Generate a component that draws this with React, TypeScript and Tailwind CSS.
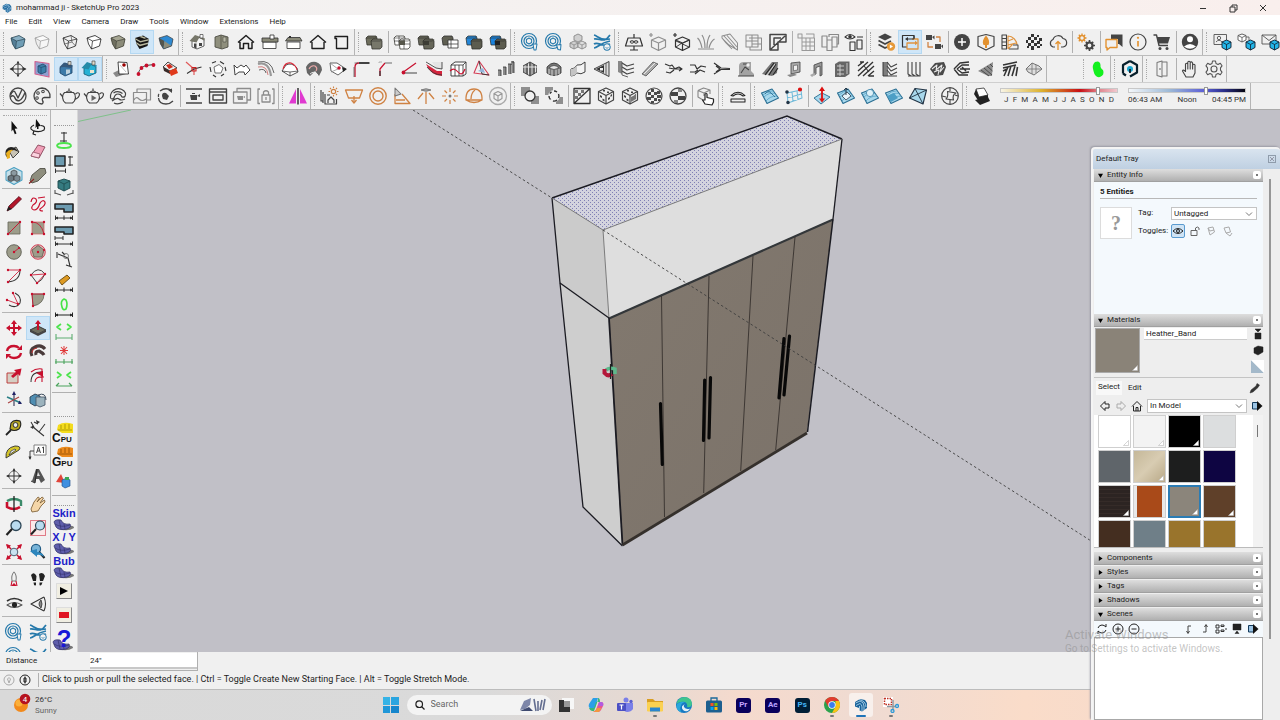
import React from "react";

type Shape = [string, string?, string?, number?];
type IconDef = Shape[];

const circle = (cx: number, cy: number, r: number) =>
  `M${cx - r} ${cy}a${r} ${r} 0 1 0 ${2 * r} 0a${r} ${r} 0 1 0 ${-2 * r} 0z`;
const line = (d: string, color = "#333", width = 1.2): Shape => [d, "none", color, width];
const fill = (d: string, color = "#333"): Shape => [d, color];
const both = (d: string, color: string, stroke = "#333", width = 0.9): Shape => [d, color, stroke, width];

const GRAY = "#8c8c8c";
const DARK = "#444444";
const ORANGE = "#cf8243";
const BLUE = "#2579ab";
const RED = "#c8102e";

const HEX = "M5 8L13 5.5L19 9L17.5 16L9.5 19L6.5 14Z";
const HEX_IN = "M5 8L10.5 11L19 9M10.5 11L9.5 19";
const cubeIcon = (a: string, b: string, c: string, edge: string): IconDef => [
  fill(HEX, a),
  fill("M5 8L10.5 11L9.5 19L6.5 14Z", b),
  fill("M10.5 11L19 9L17.5 16L9.5 19Z", c),
  line(HEX, edge, 0.9),
  line(HEX_IN, edge, 0.8),
];
const house = (body: string, roof: string): IconDef => [
  both("M6 11V17L11 19L18 16V10L14 7Z", body, "#333", 0.8),
  fill("M3.500 11L9 5L19 8.500L18.500 10.500L13 8L10.500 12.500Z", roof),
  fill("M8 13.500H10.500V18.500L8 17.500ZM13 13H16V16H13Z", "#444"),
  both("M14 4.500H17V8H14Z", "#fff", "#333", 0.7),
];
const solid = (a: string, b: string): IconDef => [
  both("M4 8L6 6H14L15 8V14L13 15H5Z", a, "#2d2d28", 0.8),
  both("M9 11L11 9H19L20 11V17L18 19H10Z", b, "#2d2d28", 0.8),
  line("M9 11H18.500L20 9.500M4 8H13L15 6.500", "#2d2d28", 0.6),
];
const ringTool = (extra: Shape[]): IconDef => [
  line(circle(11, 11, 7.5), BLUE, 1.3),
  line(circle(11, 11, 5), BLUE, 1.3),
  line("M11 8L13.600 9.500V12.500L11 14L8.400 12.500V9.500Z", BLUE, 1.1),
  ...extra,
];
const wavesTool: IconDef = [
  line("M4 5C8 6 10 11 20 9M4 9C10 8 14 14 20 5M4 14C8 11 13 18 20 14M4 18C8 18 9 13 20 11", BLUE, 1.8),
  both(circle(17, 17, 3.2), "#f2f2f2", BLUE, 1.1),
  line("M15.500 17.500Q17 19 18.500 17.500", BLUE, 0.8),
];
const terrain = (extra: Shape[]): IconDef => [
  both("M3.500 9L14 5L20.500 14L9 19.500Z", "#a8d8ec", "#2b6f93", 1.2),
  line("M6 13Q11 8 17 9.500M5 11Q9 7 15 6.800M8 17Q12 12 19 12", "#4b9cc2", 0.8),
  ...extra,
];
const teapot = (extra: Shape[] = []): IconDef => [
  line("M6.500 8.500C3.500 11 4 16.500 7.500 19H14.500C18 16.500 18.500 11 15.500 8.500ZM8 8.500C9 6.500 13 6.500 14 8.500M11 7V4.500M4.500 12.500L2 9.500M17.500 10Q20.500 7.500 21.500 10Q21.500 13.500 17 15.500", DARK, 1.3),
  ...extra,
];
const dim = (y: number, c = "#333"): Shape[] => [
  line(`M3 ${y}H21M3.500 ${y - 2.5}V${y + 2}M20.500 ${y - 2.5}V${y + 2}`, c, 1.1),
  fill(`M3 ${y}L6 ${y - 1.6}V${y + 1.6}ZM21 ${y}L18 ${y - 1.6}V${y + 1.6}Z`, c),
];
const compBox = (c: string): IconDef => [
  line("M12.500 7L19.500 10V17L12.500 20.500L5.500 17V10ZM5.500 10L12.500 13L19.500 10M12.500 13V20", c, 1.3),
  line("M5 3V7M3 5H7", c, 1.3),
];
const branches: IconDef = [line("M3 7L8 9L10 8L13 12H20M4 15L8 16L12 13M7 11L12 12L17 10L20 12L17 14", "#333", 1.3)];
const blob: IconDef = [
  fill("M4 12L9 6L18 5L20 10L17 18L9 19Z", "#4a4a4a"),
  line("M6 12L11 8L10 13L16 8L14 15L18 10M8 15L13 13L12 18", "#ececec", 1.1),
];
const checker = (c: string): IconDef => [
  line(circle(12, 12, 8), c, 1.3),
  fill("M9 5h3v3h-3zM15 7h3v3h-3zM6 8h3v3h-3zM12 8h3v3h-3zM9 11h3v3h-3zM15 11h4v3h-4zM5 13h4v3h-4zM12 14h3v3h-3zM9 17h3v2.500h-3zM16 15h2v2h-2z", c),
];
const dice = (c: string): IconDef => [
  line("M12 4L19.500 7.500V16L12 20L4.500 16V7.500ZM4.500 7.500L12 11.500L19.500 7.500M12 11.500V20", c, 1.3),
  fill("M9 6h2v1.500h-2zM13 7.500h2V9h-2zM6 11l2 1v2l-2-1zM8.500 14.500l2 1v2l-2-1zM14 14l2-1v2l-2 1zM16.500 11l1.500-1v2l-1.500 1z", c),
];

const ICONS: Record<string, IconDef> = {
  xray: cubeIcon("#8ab0c4", "#557f97", "#6f9db5", "#2e4a58"),
  backEdges: cubeIcon("#fbfbfb", "#eee", "#f6f6f6", "#9b9b9b"),
  wire: [line(HEX, "#222", 0.9), line(HEX_IN, "#222", 0.8), line("M6.500 14L14 12L17.500 16M13 5.500L14 12", "#444", 0.7)],
  hidden: cubeIcon("#fff", "#fff", "#fff", "#222"),
  shaded: cubeIcon("#a5a592", "#6f6f60", "#8b8b79", "#44443a"),
  textured: [
    fill(HEX, "#151515"),
    fill("M5 8L10.500 11L19 9L18.700 10.500L10.300 12.600L5.400 9.500ZM6.200 12L10 14.500L18.200 12.500L17.900 14L9.900 16.200L6.500 13.800ZM9 6.800L14.500 8.800L16.500 8L11.500 6Z", "#b9b9a0"),
  ],
  mono: [fill(HEX, "#2f8ad2"), fill("M5 8L10.500 11L9.500 19L6.500 14Z", "#55554c"), fill("M10.500 11L19 9L17.500 16L9.500 19Z", "#2f8ad2"), fill("M10.500 11L17.500 16L9.500 19Z", "#8d8d7b"), line(HEX, "#444", 0.8)],
  iso: house("#f4f4f4", "#77776a"),
  topView: [both("M5 7L11 5L18 7V17L12 19L5 17Z", "#8f8f7d", "#44443b", 0.9), line("M11 5V19", "#55554a", 0.9), both("M13 7H16V12H13Z", "#b8b8a6", "#44443b", 0.6)],
  frontView: [line("M6 12V18.500H9.500V13.500H14.500V18.500H18V12M4 12.500L12 5.500L20 12.500", "#1e1e1e", 1.6)],
  rightView: [both("M5 12H18V18.500H5Z", "#fff"), both("M4 8H20V12H4Z", "#8a8a79"), both("M12 5H16V9H12Z", "#fff")],
  backView: [both("M5 12H18V18.500H5Z", "#fff"), both("M3.500 11L6 7.500H18L20 11Z", "#8a8a79"), fill("M7 6H9V8H7Z", "#333")],
  leftView: [line("M6 12V18.500H18V12M4 12.500L12 5.500L20 12.500", "#1e1e1e", 1.5)],
  bottomView: [line("M6.500 6.500H17.500V18.500H6.500V8.500H5V6.500Z", "#1e1e1e", 1.5)],
  outer: solid("#6e6e5d", "#77776a"),
  intersect: [...solid("#fff", "#fff"), line("M9 6V15M4 11H15M14 9V19M9 14H20", "#333", 0.7), fill("M9 10.500H15V15H9Z", "#55554a")],
  union: [...solid("#67675a", "#67675a"), fill("M9 11H15V15H9Z", "#3c3c34")],
  subtract: [both("M4 8L6 6H14L15 8V14L13 15H5Z", "#5f5f52"), both("M10 10H20V18H10Z", "#fff"), line("M13 10V18M10 14H20", "#333", 0.8)],
  trim: solid("#2386d8", "#5c5c4f"),
  split: [...solid("#1b83dd", "#5c5c4f"), fill("M9 11H14V15H9Z", "#222")],
  ring1: ringTool([both("M15 14H19L18 20H16Z", "#f2f2f2", BLUE, 1.1)]),
  ring2: ringTool([both("M14.500 15L19 14.500L18.500 20L16 19.500Z", "#f2f2f2", BLUE, 1.1)]),
  cubes: [
    both("M12 4L16 6V10L12 12L8 10V6Z", "#cfcfcf", "#8a8a8a", 1),
    both("M8 11L12 13V17L8 19L4 17V13Z", "#cfcfcf", "#8a8a8a", 1),
    both("M16 11L20 13V17L16 19L12 17V13Z", "#dedede", "#8a8a8a", 1),
    line("M4 13L8 15L12 13L16 15L20 13M8 15V19M16 15V19", "#8a8a8a", 0.9),
  ],
  waves: wavesTool,
  plane: [line("M6 8H18L20.500 16H3.500ZM12 4V8M12 16V20M8 20H16", "#333", 1.3), line("M8 12Q10 9.500 12 12T16 12Q14 9.500 12 12T8 12", "#333", 1.1)],
  boxPlus: compBox("#8f8f8f"),
  boxDark: [...compBox("#333"), line("M6 11L19 17M6 17L12 13M19 10L13 13", "#333", 1)],
  grass: [line("M4 19H20M8 18C7 13 6 10 3.500 8M11 18C11 12 10 8 8 5M13 18C13 12 14 8 16 5M15 18C16 14 17 11 20.500 9", GRAY, 1.3)],
  clipPlane: [line("M4 6L12 4L19.500 13V20L11 15L4 8ZM6 6L17 18M9 5.500L19 17M4 8L8 13L14 19", GRAY, 1.1)],
  tiles: [line("M4 5H16V17H4ZM10 5V17M4 11H16M7 8H19.500V20H8V17M19 14H10", GRAY, 1.1)],
  cornerBox: [line("M4 4.500H20V12H12V20H4ZM5 19L19 6M8 15V8H15", DARK, 1.6)],
  gridPlus: [line("M4 4H8V8H4ZM8 8H20.500V20.500H8ZM12 8V20M16 8V20M8 12H20M8 16H20M12 4H20V8", "#999", 1.1)],
  panels: [line("M4 6H9V17H4ZM9 10H14V20.500H9ZM14 7H19V17H14ZM11 7V4.500H20.500V14H19", "#8a8a8a", 1.3)],
  eyePanels: [line("M3 7Q8 2 13 7Q8 11 3 7ZM8 12V20.500H13V12ZM15 10H20V19H15ZM15 7H21", "#333", 1.2), fill(circle(8, 6.8, 1.8), "#333")],
  assets: [fill("M4 7L11 3.500L18 7L11 10.500Z", DARK), line("M4.500 10.500L11 14L17 11M4.500 14.500L11 18L13 17", DARK, 2), fill(circle(17, 16.5, 4.2), "#e69a3a"), fill("M15.800 14.500L19 16.500L15.800 18.500Z", "#fff")],
  swap: [line("M9 17H4.500V5.500H16V9", "#333", 1.3), line("M14 9H20V19H9V13H17", "#df9440", 1.4), fill("M17 10.800L20 13L17 15.200Z", "#df9440"), line("M16 9V5.500M9 9H16", "#333", 1.2), fill("M10 7L7 9L10 11Z", "#333")],
  cams: [fill("M4 5H10V10H4ZM10 7L12.500 5.500V9.500ZM13 14H19V19H13ZM19 16L21 14.500V18.500Z", DARK), line("M14 7H18V12M6 12V17H11", ORANGE, 1.4)],
  plusDisc: [fill(circle(12, 12, 8), DARK), line("M12 8V16M8 12H16", "#fff", 1.6)],
  shieldFlame: [line("M4 6.500L12 4.500L20 6.500V16L12 20L4 16Z", DARK, 1.3), fill("M12 5.500C15 9 16 12 14.500 15H13V18H11V15H9.500C8 12 9 9 12 5.500Z", "#e2912f")],
  swatchFan: [line("M4 5H8.500V19H4ZM4 8.500H8.500M4 12H8.500M4 15.500H8.500", DARK, 1.2), line("M10 19V6C15 6 19 11 19 15M10 11L15 9M10 15L18 13M10 19L15 14", "#df9440", 1.2), line("M11 19H20V15H15", DARK, 1.1)],
  checkDark: [fill("M9 4h3v3h-3zM15 5h2v2h-2zM6 7h3v3h-3zM12 7h3v3h-3zM17 8h3v3h-3zM4 10h2v3h-2zM9 10h3v3h-3zM15 11h3v3h-3zM6 13h3v3h-3zM12 13h3v3h-3zM18 14h2v2h-2zM9 16h3v4h-3zM15 16h3v2h-3zM5 16h2v2h-2z", "#333")],
  cloudUp: [line("M9 17H7A4 4 0 0 1 7 9.500A5.500 5.500 0 0 1 17 8.500A4.300 4.300 0 0 1 17 17H15", "#444", 1.3), line("M12 20V11.500M9.500 14L12 11.500L14.500 14", "#e2912f", 1.4)],
  gears: [line(circle(8, 8, 2.5), "#e2912f", 1.8), line("M8 3.500V5M8 11V12.500M3.500 8H5M11 8H12.500M4.800 4.800L6 6M10 10L11.200 11.200M4.800 11.200L6 10M10 6L11.200 4.800", "#e2912f", 1.4), line(circle(15.5, 15.5, 3), DARK, 2.4), line("M15.500 10V12M15.500 19V21M10 15.500H12M19 15.500H21M11.800 11.800L13 13M18 18L19.200 19.200M11.800 19.200L13 18M18 13L19.200 11.800", DARK, 1.8)],
  chat: [fill("M9 4.500H20.500V17L17 14H16V9H9Z", DARK), line("M4 9.500H15V17.500H8L5 20V17.500H4Z", "#e2912f", 1.5)],
  info: [line(circle(12, 12, 8), DARK, 1.3), line("M12 11V16.500", "#e2912f", 1.8), fill(circle(12, 7.8, 1.1), "#e2912f")],
  cart: [line("M3.500 5H6.500L9 15.500H18", DARK, 1.5), fill("M6.800 7H20L18 13.500H8.300Z", DARK), fill(circle(10, 18.5, 1.5), DARK), fill(circle(17, 18.5, 1.5), DARK)],
  user: [fill(circle(12, 12, 8.2), DARK), fill(circle(12, 9.3, 3), "#fff"), fill("M6 16.500Q12 11.500 18 16.500Q12 21 6 16.500Z", "#fff")],
  whPhoto: [line("M4 4.500H16.500V14.500H4ZM6 12Q9 8.500 12 12", "#555", 1), line(circle(9, 8, 1.7), "#555", 1), both("M16.500 10L21 12V17.500L16.500 20L12 17.500V12Z", "#23b5e8", "#123", 1), line("M12 12L16.500 14.500L21 12M16.500 14.500V20", "#123", 0.9)],
  whBoxes: [both("M8 4L12 5.500V10L8 12L4 10V5.500Z", "#fff", "#555", 1), line("M4 5.500L8 7.500L12 5.500M8 7.500V12M12 7H15V10", "#555", 0.9), both("M16.500 10L21 12V17.500L16.500 20L12 17.500V12Z", "#23b5e8", "#123", 1), line("M12 12L16.500 14.500L21 12M16.500 14.500V20", "#123", 0.9)],
  whMail: [line("M4 5H18V14H4ZM4 5L11 10.500L18 5", "#555", 1), both("M16.500 10L21 12V17.500L16.500 20L12 17.500V12Z", "#23b5e8", "#123", 1), line("M12 12L16.500 14.500L21 12M16.500 14.500V20", "#123", 0.9)],
  section: [line(circle(12, 12, 5), "#333", 1), line("M4.500 12H19.500M12 4.500V19.500", "#333", 1), fill("M3.500 12L7 10V14ZM20.500 12L17 10V14ZM12 4L10.500 6.500H13.500ZM12 20L10.500 17.500H13.500Z", "#333")],
  sectPlane: [both("M5 4.500L19 6.500V20L5 17Z", "#8fa0cf", "#d4608e", 1.2), both("M8 9L13 7L16 9V15L11 17L8 15Z", "#3c7fa9", "#244b70", 0.9), line("M8 9L11 10.500L16 9M11 10.500V17", "#244b70", 0.8)],
  sectCut: [both("M6 11L11 6L18 9V16L11 19L6 16Z", "#3c7aa8", "#1e4568"), fill("M5 10.500L10 5.500L19 8.500L17 11L10 10Z", "#35597c"), fill("M12 12.500H16V16L12 17.500Z", "#bed2dd"), both("M14 4.500H17V8H14Z", "#d7d7cf", "#444", 0.7)],
  sectFill: [both("M6 11V17L11 19L18 16V10L14 7Z", "#26b1d5", "#145b74"), fill("M3.500 11L9 5L19 8.500L18 10.500L13 8L10.500 12.500Z", "#258ba8"), fill("M12 13H16V16H12Z", "#e9e3cf"), both("M14 4H17V8H14Z", "#ded9c7", "#444", 0.7)],
  m1: [fill("M3 16L9 13L16 17L6 20Z", "#888"), both("M8 5L17 5.500L18.500 17L9 17Z", "#fff", "#222"), fill(circle(14, 8, 1.8), "#900"), line("M10 8L16 15", "#aaa", 0.8)],
  m2: [line("M4 17Q6 10 12 8.500L20 7.500", "#333", 1), fill(circle(4.5, 17, 1.9), RED), fill(circle(7.5, 11, 1.9), RED), fill(circle(12.5, 8.5, 1.9), RED), fill(circle(19.5, 8, 1.9), RED)],
  m3: [both("M5 10L10 5L19 11L12 14Z", "#eee", "#222"), fill("M5 10L12 14V17L6 14Z", "#3a2a28"), fill("M11 14L18 11L20 16L13 19Z", "#e03a1b"), fill("M8 8L12 7L15 10L11 12Z", "#d02a1b")],
  m4: [line("M4 5L12 12V18", "#e05a5a", 1.3), line("M12 12L19.500 10M12 12L5 16.500", "#333", 1.1), line("M10 10.500H14V14H10Z", "#c22", 1.2)],
  m5: [line("M6 6L10 4.500M14 4.500L18 7M4 10L5 15M19 10L20 14M7 18L10 20M15 19L18 17", "#333", 1.2), both("M8 10L13 7.500L17 11L15 16L9 16Z", "#fff", "#555", 0.9)],
  m6: [both("M4 8L7 11L11 8L14 10L16 8L20 13L15 18L14 15H9L5 18Z", "#fff", "#333", 1)],
  m7: [line("M4 7Q15 4 17 19", "#999", 2.4), line("M4 10Q13 8 14 18", "#c66", 0.9), line("M5 13Q11 11 12 16M4 5Q17 2 20 16", "#333", 0.8)],
  m8: [both("M4 14L8 8Q14 5 19 11L20 15L12 19Z", "#fff", "#333"), line("M5 12Q7 5 13 6Q18 8 19 13", "#d23", 1.1), line("M4 14L12 15L20 14M12 15V19", "#333", 0.8)],
  m9: [fill("M4 10Q7 4 14 5Q20 7 20 13L17 19L13 14L8 19L5 16Z", "#666"), line("M7 12Q9 8 13 9Q16 11 14 14", "#eaa", 1.2), line("M8 17Q12 13 16 18", "#eee", 1)],
  m10: [both("M4 6H11L20 12L12 18L5 14Z", "#fff", "#444"), line("M4 6L12 12L5 15", "#888", 0.8), fill(circle(13, 11, 1.7), RED), fill("M16 10L21 12L17 15Z", "#222")],
  m11: [line("M5 20V10Q5 6 9 6", RED, 1.4), line("M9 6H19.500", "#111", 1.7), line("M4 20V10M4.500 6H8", "#555", 0.8)],
  m12: [line("M6 19V12L11 6", RED, 1.3), line("M11 6H18", "#777", 1.2), line("M6 19V14", "#333", 1.3), line("M5 6V5H8", "#aaa", 1)],
  m13: [line("M4 16L18 6", RED, 1.3), line("M4 16H19", "#555", 1.2), fill(circle(5.5, 15.5, 1.9), RED)],
  m14: [fill("M4 7L15 14H20V19Q9 19 4 7Z", "#d5243d"), fill("M10 5H20V12L14 11Z", "#e4e4e4"), line("M4 5L14 11L20 12V5", "#333", 0.9), line("M5 10Q11 18 20 18", "#333", 0.9)],
  m15: [both("M5 8L9 5H20V17L17 19H5Z", "#fff", "#333", 1), line("M5 8H17V19M17 8L20 5M9 8V19M13 8V19", "#333", 0.9), line("M4 14Q8 10 12 15T19 12", RED, 1.3)],
  m16: [line("M9 4L19 18L4 16Z", "#d33b55", 1.2), line("M9 4L12 17L19 18", "#333", 1), fill("M8 14L13 11L15 16Z", "#93b5dd")],
  m17: [fill("M4 13H7V19H4ZM9 10H12V18H9ZM14 7H17V17H14ZM17 4H20V16H18V8H17Z", "#888"), line("M4 13H7V19M9 10H12V18M14 7H17V17M18 5H20V16", "#333", 0.9)],
  m18: [fill("M5 9L12 5L19 9V15L12 19L5 15Z", "#666"), line("M7 6V17M10.500 5V19M14 5V19M17.500 7V17M5 10H19", "#eee", 1), line("M5 9L12 5L19 9M5 15L12 19L19 15", "#333", 0.9)],
  m19: [both("M5 10Q12 2 19 10V16Q12 21 5 16Z", "#777", "#333"), both("M7 11Q12 6 17 11Q12 14 7 11Z", "#e6e6e6", "#444", 0.8), line("M7 12V17M10 13V19M14 13V19M17 12V17", "#ddd", 1)],
  m20: [both("M5 12Q9 12 11 8Q15 9 19 5V15Q15 18 11 16Q9 19 5 19Z", "#f3f3f3", "#333", 1), fill("M5 12Q9 12 11 8V16Q9 19 5 19Z", "#c4c4c4")],
  m21: [both("M4 12L19 4.500V19.500Z", "#ddd", "#333", 1), fill("M6 12L14 8V16Z", "#333"), fill("M10 11H13V13.500H10Z", "#eee"), line("M16 6V18", "#555", 1)],
  m22: [line("M8 6L13 9L20 7M8 10L13 13L20 11M8 14L13 17L20 15", "#444", 1.4), fill("M4 4H8V17L4 15Z", "#888"), line("M8 5V18L14 20", "#555", 1)],
  m23: [both("M4 17L15 5L20 7L8 19Z", "#aaa", "#555", 0.9), line("M6 17L17 6", "#eee", 1)],
  m24: branches,
  m25: [line("M4 8L9 8L11 12L15 9L20 10M4 15H9L12 13M9 17L14 13L19 15", "#333", 1.3)],
  m26: [line("M4 6L11 11L20 11.500M4 17L11 12.500L20 12.500M6 9L10 12M6 15L10 12", "#333", 1.3)],
  m27: [fill("M5 18V9Q5 5 10 5H17V14L20 17V19H5Z", "#a3a3a3"), line("M7 16L11 10L15 13M4 19H20M9 7H14", "#444", 1.1), fill(circle(14, 8, 1.7), "#eee")],
  m28: [fill("M4 17L14 5H20L19 16L14 19Z", "#777"), line("M7 18L16 6M11 18L18 7M15 18L20 11", "#222", 1.1), line("M9 18L17 7", "#eee", 0.9)],
  m29: [both("M9 6L18 5V15L9 17Z", "#aaa", "#444"), both("M11.500 8.500L15.500 8V13L11.500 13.800Z", "#eee", "#555", 0.7), fill("M5 18L12 16.500L15 18L8 20Z", "#888")],
  m30: [both("M8 8L16 5V18L14 19V9L10 10.500V17L8 18Z", "#999", "#444"), fill("M4 18L8 16L10 17L6 20Z", "#aaa")],
  m31: [fill("M5 7L9 4.500H19.500V17L15 20H5Z", "#666"), line("M7 9H14M7 13H14M7 17H14M10 7V19M17 6V17", "#ddd", 0.9)],
  m32: [line("M4 9L9 5M4 14L14 5M4 19L19 5M9 19L20 9M14 19L20 14M6 5H10M15 19H20", "#333", 1.5), line("M10 9L15 15", "#333", 1.1)],
  m33: [fill("M5 5H10V19H5Z", "#7d7d7d"), line("M9 5L13 10L19 7M9 9L13 14L19 11M9 13L13 18L19 15", "#444", 1.3), line("M5 5V19H19", "#333", 1)],
  m34: [line("M6 5V17L9 19M10 5V17L13 19M14 5V17L17 19M18 5V19H6", "#444", 1.2)],
  m35: blob,
  m36: [line("M4 12L10 6L19 5M4 12L9 18L18 18M7 12L12 8L19 8M7 12L12 16L19 15M10 12H20M12 10L16 14", "#333", 1.5)],
  m37: [fill("M4 14L19 5L18 19L14 19Z", "#8c8c8c"), line("M7 13L15 19M10 11L18 18M13 9L18.500 14M16 7L19 10", "#444", 1)],
  m38: [line("M5 8L19 5M5 11L18 8M6 19L10 10M10 19L13 9M14 19L17 9M18 19L19.500 10M5 14L9 12", "#333", 1.7)],
  m39: [both("M4 12L10 6L17 9L20 12L12 18L6 15Z", "#ddd", "#666", 1), line("M10 6V17M14 8V16M4 12H20", "#777", 0.9)],
  bean: [fill("M9 5Q14 3 14.500 8Q14 11 17 13Q19 18 14 20Q9 21 7.500 14Q5.500 8 9 5Z", "#13f01e")],
  hexP: [line("M12 4L19 8V15.500L12 19.500M5 16.500V8L12 4M5 16.500L8 18.500", "#08202c", 2.4), fill(circle(12, 12, 3), "#1aa6cf"), line("M12 16V12", "#08202c", 2)],
  door: [line("M7 5.500L12 4V20L7 18.500ZM12 5H17V19H12", "#777", 1.1), line("M10 11V13", "#555", 1)],
  handOut: [line("M8 20L4.500 14Q5 12 7.500 14.500V7Q9 5.500 9.800 7V12V5Q11 3.500 12.200 5V12V5.500Q13.500 4 14.600 6V12V8Q16 6.500 17 8V16L15 20Z", "#444", 1.2)],
  gear: [line(circle(12, 12, 3), "#555", 1.2), line("M10.500 4H13.500L14 6.500L16 7.500L18.300 6.200L20 8.800L18.500 10.800V13.200L20 15.200L18.300 17.800L16 16.500L14 17.500L13.500 20H10.500L10 17.500L8 16.500L5.700 17.800L4 15.200L5.500 13.200V10.800L4 8.800L5.700 6.200L8 7.500L10 6.500Z", "#555", 1.2)],
  vray: [line(circle(12, 12, 8), DARK, 1.4), line("M4.500 11Q7.500 4.500 9.500 9L12 14L16 5.500M4.500 13Q7 10.500 8.500 13Q10 17.500 13.500 16.500Q16.500 15 19 8.500", DARK, 1.5)],
  palette: [line("M12 4A8 8 0 1 0 12 20Q14 18.500 12.500 16.500Q11.500 14 14.500 13.500H20A8.300 8.300 0 0 0 12 4Z", DARK, 1.4), line(circle(8, 9, 1.3), DARK, 1.1), line(circle(13, 7.5, 1.3), DARK, 1.1), line(circle(7, 14, 1.3), DARK, 1.1)],
  tea: teapot(),
  teaPlay: teapot([fill("M9.500 11L14.500 14L9.500 17Z", "#666")]),
  chaos: [line("M4.500 14A8 8 0 0 1 19.500 9Q20 14 16 13Q15 10 12 10Q9 10 8 14Q6 16 4.500 14M6 17Q11 13 13 15T19 15M8 19Q12 21 17 18M7.500 9Q12 6 16.500 9.500", DARK, 1.3)],
  frames: [line("M3.500 8.500H16.500V19H3.500ZM7 8V5H20.500V16H17M4 16Q6 12 9 15T16 15", GRAY, 1.3)],
  refresh: [line("M6 7Q12 2.500 18 7M4.500 14Q5 20 12 20Q16 20 19 17M5 10Q4 11 4.500 13", DARK, 1.4), fill("M8 12Q8 8 12 9L15 12L13 16L9 15ZM14 6L18 4.500V9Z", DARK)],
  frameTea: [line("M4 5H20M4 19H20", DARK, 1.8), fill("M8 11H15V16H9ZM15 12L18 10V13ZM10 9H13V10H10Z", DARK)],
  window: [line("M3.500 5H20.500V19H3.500ZM3.500 8H20.500M7 11H17V16H7Z", DARK, 1.5)],
  batch: [line("M3.500 8H17V19H3.500ZM7 8V4.500H20.500V16H17", GRAY, 1.4), fill("M7 12H13V16H8ZM13 13L15 12V14Z", GRAY)],
  lock: [line("M6 5H4V19.500H6M18 5H20V19.500H18M8 11H16V18H8ZM9.500 11V8Q12 5.500 14.500 8V11M12 13V16", GRAY, 1.4)],
  mirror: [fill("M10 5V19.500H3Z", "#e03ad0"), fill("M14 5V19.500H21Z", "#e03ad0"), line("M12 4V20.500", "#222", 1.5)],
  lightGen: [line("M3 6V17H5M5 8V19M7 10V20H18.500V15M9 11H12M10 19V16L13 13L16 16V19", "#444", 1.3), line(circle(15.5, 7.5, 2.2), ORANGE, 1.3), line("M15.500 2.500V4M15.500 11V12.500M10.500 7.500H12M19 7.500H20.500M12 4L13 5M18 10L19 11M19 4L18 5", ORANGE, 1.2)],
  rectLight: [line("M3.500 6H20.500L17.500 14H6.500ZM12 12V18", ORANGE, 1.4), line("M9.500 16L12 19L14.500 16", ORANGE, 1.4)],
  sphere: [line(circle(12, 12, 8.2), ORANGE, 1.5), line(circle(12, 12, 5), ORANGE, 1.5)],
  spot: [line("M5 10V19.500H20L12 10M6 16H15", ORANGE, 1.4), both("M5 4L11 10L5 12Z", "#ccc", "#777", 1.1)],
  ies: [line("M12 8V20M9 9L4 15M15 9L20 15", ORANGE, 1.4), both("M7 6Q12 3.500 17 6Q12 8.500 7 6Z", "#aaa", "#777", 1)],
  omni: [line("M12 4V8M12 16V20M4 12H8M16 12H20M6.500 6.500L9 9M15 15L17.500 17.500M17.500 6.500L15 9M6.500 17.500L9 15", ORANGE, 1.3), fill(circle(12, 12, 1.5), "#777")],
  dome: [line("M4 16Q3.500 5 12 5T20 16ZM4 16Q12 21 20 16M9 15Q9 9 13 6", ORANGE, 1.4)],
  meshLight: [line(circle(12, 12, 8.5), "#aaa", 1.4), line("M12 7.500L16 9.500V14.500L12 17L8 14.500V9.500ZM8 9.500L12 12L16 9.500M12 12V17", "#999", 1.2)],
  obj1: [fill("M3 3H12V12H3ZM13 12H21V20H13Z", "#8f8f8f"), both(circle(12, 12, 5), "#f0f0f0", "#333", 1.4)],
  obj2: [fill("M3 3H11V11H3ZM14 13H21V20H14Z", "#8f8f8f"), both(circle(12, 12, 5), "#f0f0f0"), line(circle(12, 12, 5), "#f0f0f0", 2), line("M12 7A5 5 0 0 1 15 8M16.500 10A5 5 0 0 1 16.500 14M15 16A5 5 0 0 1 11 17M8.500 15.500A5 5 0 0 1 7 12M7.800 9.500L9.500 7.700", "#333", 1.5)],
  uv: [line("M4 4.500H20V19.500H4ZM20 4.500L4 19.500", "#333", 1.4), fill("M5 6H8V9H5ZM11 6H14V9H11ZM8 9H11V12H8ZM5 12H8V15H5Z", "#777")],
  dice1: dice("#444"),
  dice2: [...dice("#444"), fill("M13 13L18 10.500V15L13 18Z", "#777")],
  checker: checker("#4a4a4a"),
  checker2: [line(circle(12, 12, 8), DARK, 1.4), fill("M5 8H12V12H19V16H12V12H5Z", DARK), fill("M12 5H16V8H12ZM8 16H12V19H8Z", "#888")],
  pickBox: [line("M4 6.500L9.500 4L16 6V10M4 6.500V13L9 16M4 6.500L10 9L16 6M10 9V12", "#888", 1.2), both("M11 20L8.500 16L11 16V10Q12.300 9 13 10V13.500L19.500 15V18L18 21Z", "#fff", "#222", 1.3)],
  equals: [line("M5 11.500Q12 5 19 11.500L17 12Q12 8 7 12Z", "#222", 1.1), line("M5 15H19V18H5Z", "#222", 1.1)],
  t1: terrain([line("M7 10Q10 6 13 9T17 13", "#2b6f93", 1)]),
  t2: [line("M5 9L19 6L20 14L6 19ZM5 14L19.500 10M10 8L11 17M15 7L16 16", "#6cb8d8", 1.1), fill(circle(5, 8, 1.8), "#234"), fill(circle(18, 5.5, 2.1), "#d11"), fill(circle(6, 18.5, 1.8), "#234")],
  t3: [both("M4 14L12 9L20 13L11 20Z", "#a8d8ec", "#2b6f93", 1), line("M12 6V16", "#d11", 2), fill("M12 2.500L15 7H9ZM12 18.500L15 14.500H9Z", "#d11")],
  t4: terrain([both("M8 12L13 8L17 12L12 16Z", "#e8f4fa", "#234", 0.8), line("M12 4V11M10 6L12 4L14 6", "#234", 1)]),
  t5: terrain([both(circle(12, 9, 3.6), "#dff1f8", "#4b8fb0", 1)]),
  t6: terrain([fill("M5 12L12 9L16 14L9 18Z", "#4d9fc6")]),
  t7: [both("M9 4.500L20.500 6L17 20L3.500 14Z", "#a8d8ec", "#234", 1.2), line("M9 4.500L17 20M20.500 6L3.500 14", "#234", 1)],
  aperture: [line(circle(12, 12, 8.3), "#444", 1.3), line("M9.500 7.500L18 9Q14 11 15.500 16L8 15Q10.500 12.500 9.500 7.500ZM12 4V7M20 12L17 11M12 20V16M4 12L8 13", "#444", 1.2)],
  shadowBox: [fill("M5 16L18 13L20 17L10 21Z", "#222"), both("M6 5L14 4L18 11L9 13Z", "#fff", "#333"), fill("M6 5L9 13V18L4 10ZM9 13L18 11V15L9 18Z", "#222")],
  select: [fill("M9.500 5L15.500 12.500L12.700 12.700L14.500 17.500L12.800 18.200L11 13.500L9.500 15.500Z", "#111")],
  lasso: [line("M8 9Q2 12 7 14.500Q13 17 18 14Q20 10 15 9.500M8 14.500L7 18L10 19", "#222", 1.3), fill("M10 3L15 10L12.500 10.200L12.500 13L11 13V10.500L9.500 12Z", "#111")],
  paint: [both("M7 11L14 7L17 12L11 18Z", "#c9c4b5", "#222"), fill("M4 10Q7 5 13 8L17 12L12 10Q7 10 6 18Q2 15 4 10Z", "#222"), fill("M4 13Q7 9 11 10Q7 12 8 18L5 19Z", "#e9ae1f")],
  eraser: [both("M5 16L12 5L19 7L13 18Z", "#f0a0b8", "#8d4a5e", 1), both("M5 16L7 12L14 14L13 18Z", "#fbd3df", "#8d4a5e", 0.8)],
  component: [both("M12 3.500L20 7.500V16L12 20.500L4 16V7.500Z", "#c6e0ea", "#4a9fc1", 1.1), both("M9 11L12 12.500V16L9 17.500L6 16V12.500Z", "#6b7880", "#333", 0.7), both("M15 11L18 12.500V16L15 17.500L12 16V12.500Z", "#7c8b93", "#333", 0.7), both("M12 6L15 7.500V10.500L12 12L9 10.500V7.500Z", "#8b9aa1", "#333", 0.7)],
  tag: [both("M4 17L6 11L14 4.500H19L20 9L12 17L6 19Z", "#8e8e7e", "#48483e", 0.9), line("M3 19.500L8 15", "#822", 1.1)],
  pencil: [both("M5 19L7 14L17 4.500L19.500 7L10 16.500Z", "#b3162a", "#401", 0.8), fill("M5 19L6.500 14.500L9.500 17Z", "#222")],
  freehand: [line("M5 10Q6 4 10 7Q12 10 7 13Q4 17 8 18Q12 18 14 11Q17 7 19 10Q20 13 14 17Q13 19 17 19M12 6L19 5", RED, 1.3)],
  lineRect: [both("M6 6H18V18H6Z", "#9d9d8b", "#66665a"), line("M6 18L18 6", RED, 1), fill(circle(6, 18, 1.2), RED), fill(circle(18, 6, 1.2), RED)],
  rotRect: [both("M6 6H18V18H6Z", "#9d9d8b", "#c66", 0.8), line("M6 6Q15 6 18 18", RED, 0.9), fill(circle(6, 6, 1.2), RED), fill(circle(18, 6, 1.2), RED), fill(circle(18, 18, 1.2), RED), fill(circle(6, 18, 1.2), RED)],
  circleTool: [both(circle(12, 12, 7.3), "#9d9d8b", "#55554a"), line("M12 12L17 8", RED, 0.9), fill(circle(12, 12, 1.2), RED), fill(circle(17, 8, 1.1), RED)],
  polygon: [both(circle(12, 12, 7.3), "#e0bdb8", RED, 0.8), both("M12 5.500L18 10L16 17H8L6 10Z", "#9d9d8b", "#6b5650"), fill(circle(12, 12, 1.2), RED), fill(circle(18, 10, 1.1), RED)],
  arc: [line("M18 6Q18 17 6 18", "#333", 1.1), line("M6 6H18L6 18", RED, 0.9), fill(circle(6, 6, 1.2), RED), fill(circle(18, 6, 1.2), RED), fill(circle(6, 18, 1.2), RED)],
  arc2: [line("M5 11Q12 1 19 10Q16 17 11 19Z", "#333", 1), line("M5 11L19 10L11 19", RED, 0.9), fill(circle(5, 11, 1.2), RED), fill(circle(19, 10, 1.2), RED), fill(circle(11, 19, 1.2), RED)],
  arc3: [line("M13 5Q20 9 18 15Q14 21 7 17", "#333", 1.1), line("M11 5L16 16L5 12", RED, 0.9), fill(circle(11, 5, 1.2), RED), fill(circle(16, 16, 1.2), RED), fill(circle(5, 12, 1.2), RED)],
  pie: [both("M6 6H18Q18 16 7 18Z", "#9d9d8b", "#66665a"), line("M6 6H18M6 6L7 18", RED, 0.9), fill(circle(6, 6, 1.2), RED), fill(circle(18, 6, 1.2), RED), fill(circle(7, 18, 1.2), RED)],
  move: [fill("M12 4L15 8H13V11H16V9L20 12L16 15V13H13V16H15L12 20L9 16H11V13H8V15L4 12L8 9V11H11V8H9Z", RED), line("M12 7V17M7 12H17", RED, 2)],
  pushpull: [both("M4 14L12 10L20 14L12 18Z", "#6e6e60", "#222"), fill("M4 14L12 18V20L4 16ZM20 14L12 18V20L20 16Z", "#444"), fill("M12 4L15 8H13V14H11V8H9Z", RED)],
  rotate: [line("M5 11Q6 6 12 6Q15 6 17 8M19 13Q18 18 12 18Q9 18 7 16", RED, 2.6), fill("M15 10H20V5ZM9 14H4V19Z", RED)],
  follow: [line("M6 16Q3 9 9 7Q15 4 19 9M10 15Q9 11 13 11Q17 13 18 15", "#4a3b3b", 3.4), line("M6 13Q6 9 11 8", "#b33", 1.2)],
  scale: [both("M5 9H16V19H5Z", "#d5cfc4", "#b33", 1), fill("M12 6L19.500 4.500L18 12L16 10L11 14L9 12L14 8Z", RED)],
  offset: [line("M5 18Q5 7 17 8", "#333", 1.1), line("M9 18Q9 12 18 13M5 8Q10 4 16 5V18", RED, 1.2), fill("M10 9L17 7L17 13Z", RED)],
  axes: [line("M12 5V18", "#335", 1.2), line("M5 9L19 15", "#2a7f86", 1.6), line("M6 15L17 9", "#a44", 1.2), fill("M12 3L14 7H10ZM20 16L16 16L17.500 12.500Z", "#226")],
  solidTools: [both("M4 9L9 6L14 8V15L9 18L4 15Z", "#4f8eb2", "#234", 0.9), both("M10 9H19V17L14 19L10 17Z", "#9cb3bd", "#456", 0.9), line("M12 7Q20 4 20 12", "#345", 1)],
  tape: [both("M9 7Q12 3 18 5Q20 9 17 13Q12 16 8 13Z", "#b9a922", "#222", 1.2), both(circle(13.5, 9, 2.4), "#eee", "#222", 1), line("M4 19L9 14", "#222", 2)],
  dimTool: [line("M6 10L13 16L19 8M5 6L9 13M8 6L12 8M13 16L18 20", "#333", 1.1), fill("M10 4L14 6L11 8ZM4 11L8 10L7 13Z", "#333")],
  protractor: [both("M4 18Q3 8 13 6Q20 6 17 10Z", "#d5c629", "#333", 1), both("M7 15Q8 10 13 9L14 10Z", "#f2f2f2", "#333", 0.8)],
  textTool: [both("M8 5H20V15H8Z", "#fff", "#777", 1), line("M10.500 13L12.500 7L14.500 13M11.300 11H13.700M16 8L17.500 7V13M4 19V11H8", "#333", 1), fill("M4 20L2.500 16.500H5.500Z", "#333")],
  axisSec: [line(circle(12, 12, 5), "#555", 0.9), line("M12 5V19M5 12H19", "#333", 1.1), fill("M12 4L13.500 7H10.500ZM12 20L10.500 17H13.500ZM4 12L7 10.500V13.500ZM20 12L17 13.500V10.500Z", "#333")],
  text3d: [fill("M6 17L10 5H13L19 16L15 19L13 15H10L9 19Z", "#555"), fill("M11 12L12 8L14 12Z", "#ddd"), line("M5 17L9 19L11 5", "#222", 1)],
  orbit: [line("M5 9Q12 5 19 9V14", "#3b8a69", 2.6), line("M5 10V15Q12 19 18 15", RED, 2.8), line("M12 4V20", "#222", 1.4)],
  pan: [both("M5 17L8 10L12 5L13.500 6L11 10L16 5L17.500 6L14 11L18.500 8L19 10L15 14L12 19L6 20Z", "#f4d6a8", "#7a5b31", 0.9)],
  zoom: [both(circle(14, 9.500, 5), "#b9dcf0", "#2c4556", 1.4), line("M10 13L4.500 19", "#222", 2.4)],
  zoomWin: [["M4.500 4.500H19.500V19.500H4.500Z", "#fbe9e9", "#e07a86", 1.1], both(circle(14, 9.500, 4.500), "#b9dcf0", "#2c4556", 1.3), line("M10 13L5 18.500", "#222", 2.2)],
  zoomExt: [both(circle(12, 12, 3.8), "#c9e3f1", "#456", 1), fill("M4 4L9 5.500L5.500 9ZM20 4L15 5.500L18.500 9ZM4 20L9 18.500L5.500 15ZM20 20L15 18.500L18.500 15Z", RED), line("M5 5L9 9M19 5L15 9M5 19L9 15M19 19L15 15", RED, 1.6)],
  zoomPrev: [both(circle(10, 9, 4.6), "#78b4d8", "#205a84", 1.3), line("M13 12L18.500 18", "#222", 2.4), fill("M4 11L11 9V12Q17 12 18 17Q14 14 11 15V17Z", "#2d86bd")],
  posCam: [line("M12 4Q9 7 10 13H14Q15 7 12 4Z", "#777", 1.1), line("M10 13L9 18M14 13L15 18", RED, 1.2), fill("M9 18H15L12 15Z", RED)],
  feet: [fill("M5 7Q8 3 10.500 8L10 13L7 13ZM7.500 14.500H10L10 17Q8 19 7.500 14.500ZM13 6Q17 3 19 8L17 13H14ZM13.500 14.500H16.500Q15 19 13.500 17Z", "#222")],
  look: [line("M5 9Q12 4 20 9", "#333", 1.8), line("M5 13Q12 8 20 13Q12 18 5 13Z", "#555", 1.2), fill(circle(12.5, 12.8, 2.6), "#222")],
  fov: [line("M18 5L5 12L18 19", "#333", 1.2), line("M18 5Q21 12 18 19", "#333", 1.1), both("M15 8Q17 12 15 16Q11 12 15 8Z", "#888", "#333", 0.9)],
  d1: [line("M12 4V14M9 5H15M8 13H15", "#333", 1.2), line("M5 18Q5 15 12 15T19 18Q18 20 12 20T5 18", "#4be34b", 2)],
  d2: [both("M3 4H13V14H3Z", "#6d9bb0", "#222", 1.6), line("M18 4V14M16 5H21M16 13H21", "#333", 1.2), line("M3 19H14M3.500 16.500V21M13.500 16.500V21", "#333", 1.1)],
  d3: [both("M12 3L18 5V12L12 15L6 12V5Z", "#357b80", "#1d4a4d", 1), line("M6 5L12 8L18 5M12 8V15", "#1d4a4d", 0.9), line("M3 17L9 19M21 17L15 19M3 14V18M21 14V18", "#555", 1.2)],
  d4: [both("M3 4H21V12H12V9H3Z", "#6d9bb0", "#222", 1.7), ...dim(18), line("M12 15.500V20", "#333", 1.1)],
  d5: [both("M3 3H21V10H12V8H3Z", "#6d9bb0", "#222", 1.7), ...dim(20), line("M3 14H11M3 12V16M11 12V16", "#333", 1.1)],
  d6: [line("M6 6L16 10L18 18M5 4V10M10 4L13 7M14 17L20 19", "#333", 1.2), line(circle(14, 8, 2.500), "#777", 1)],
  d7: [both("M7 9L15 3L18 6L10 13Z", "#dd9a22", "#6a4a10", 1), ...dim(18), line("M12 15.500V20", "#333", 1.1)],
  d8: [line("M12 3Q8 5 10 11Q11 15 14 13Q16 8 14 4Z", "#46e246", 1.8), ...dim(19, "#222")],
  d9: [line("M9 4L5 7L9 10M15 4L19 7L15 10", "#4be34b", 1.8), line("M4 18H20M4 14V20M20 14V20", "#5fae72", 1.2)],
  d10: [line("M9 3L15 10M15 3L9 10M12 2V11M8 6.500H16", "#e03a3a", 1.1), line("M3 18H21M4 15V20M12 15V20M20 15V20", "#4aa35c", 1.2)],
  d11: [line("M5 4L9 7L5 10M19 4L15 7L19 10", "#4be34b", 1.8), line("M4 18H20M4 18L7 15M20 18L17 15", "#4aa35c", 1.3)],
  fistY: [fill("M6 4Q12 0 21 3V12H10L5 9Z", "#f4dc1d"), line("M9 4V8M13 3V8M17 3V8M6 9H20", "#a58f00", 0.9)],
  fistO: [fill("M6 4Q12 0 21 3V12H10L5 9Z", "#ec8a1c"), line("M9 4V8M13 3V8M17 3V8M6 9H20", "#8d4d00", 0.9)],
  prims: [fill("M4 13L9 5L13 14Z", "#e0453a"), both("M10 11L15 9L18 11V17L13 19L10 17Z", "#3f8fe0", "#1c4f8d", 0.7), fill("M13 8H17V11H13Z", "#39a656")],
};

function Icon({ name }: { name: string }) {
  const shapes = ICONS[name] ?? [];
  return (
    <svg viewBox="0 0 24 24" className="size-6 shrink-0" aria-hidden="true" strokeLinejoin="round">
      {shapes.map(([d, f, s, w = 1], i) => (
        <path key={i} d={d} fill={f} stroke={s ?? "none"} strokeWidth={w * 0.92} />
      ))}
    </svg>
  );
}

function Tool({ name, active = false }: { name: string; active?: boolean }) {
  return (
    <button
      type="button"
      aria-label={name}
      className={active ? "size-6 shrink-0 bg-[#cfe6f8] ring-1 ring-inset ring-[#b4d8f2]" : "size-6 shrink-0"}
    >
      <Icon name={name} />
    </button>
  );
}

const Handle = ({ first = false }: { first?: boolean }) => (
  <div
    className={
      first
        ? "flex h-[26px] w-1.5 shrink-0 items-center justify-center"
        : "flex h-[26px] w-2 shrink-0 items-center justify-center border-l border-[#b5b5b5]"
    }
  >
    <div className="h-5 border-l border-dotted border-[#a8a8a8]" />
  </div>
);
const Sep = () => (
  <div className="flex w-1 shrink-0 justify-center">
    <div className="h-[22px] w-px bg-[#b0b0b0]" />
  </div>
);

/* "#" starts a new docked group, "|" is a thin separator, "*" marks a pressed tool. */
function Tools({ spec }: { spec: string }) {
  return (
    <>
      {spec.split(" ").map((t, i) => {
        if (t === "#") return <Handle key={i} first={i === 0} />;
        if (t === "|") return <Sep key={i} />;
        return <Tool key={i} name={t.replace("*", "")} active={t.startsWith("*")} />;
      })}
    </>
  );
}

const ROW1 =
  "# xray backEdges | wire hidden shaded *textured mono # iso topView frontView rightView backView leftView bottomView # outer | intersect union subtract trim split # ring1 ring2 cubes waves # plane boxPlus boxDark grass clipPlane tiles cornerBox | gridPlus panels eyePanels # assets *swap cams | plusDisc shieldFlame swatchFan checkDark cloudUp | gears | chat info cart | user # whPhoto whBoxes whMail";
const ROW2 =
  "# section sectPlane *sectCut *sectFill # " + Array.from({ length: 39 }, (_, i) => `m${i + 1}`).join(" ");
const ROW2B = "# bean # hexP # door | handOut gear";
const ROW3 =
  "# vray palette | tea teaPlay chaos frames refresh | frameTea window batch lock # mirror # lightGen rectLight sphere spot ies omni dome meshLight # obj1 obj2 | uv dice1 dice2 checker checker2 | pickBox # equals # t1 t2 | t3 t4 t5 t6 t7 # aperture # shadowBox";

const SIDE = [
  ["select", "lasso", "paint", "eraser", "component", "tag"],
  ["pencil", "freehand", "lineRect", "rotRect", "circleTool", "polygon", "arc", "arc2", "arc3", "pie"],
  ["move", "*pushpull", "rotate", "follow", "scale", "offset", "axes", "solidTools"],
  ["tape", "dimTool", "protractor", "textTool", "axisSec", "text3d"],
  ["orbit", "pan", "zoom", "zoomWin", "zoomExt", "zoomPrev"],
  ["posCam", "feet", "look", "fov"],
  ["ring1", "waves", "ring2", "waves"],
];

const SHADOW_SLIDER =
  "h-[5px] w-full appearance-none border border-[#c8c8c8] [&::-webkit-slider-thumb]:h-2 [&::-webkit-slider-thumb]:w-1 [&::-webkit-slider-thumb]:appearance-none [&::-webkit-slider-thumb]:border [&::-webkit-slider-thumb]:border-[#999] [&::-webkit-slider-thumb]:bg-white";

function ShadowControls() {
  return (
    <div className="flex h-[26px] items-center gap-2.5 border-r border-[#b5b5b5] pl-1.5 pr-1 text-[8px] leading-[8px] text-[#333]">
      <label className="flex w-[118px] flex-col gap-[3px]">
        <input
          type="range"
          min={0}
          max={100}
          defaultValue={85}
          aria-label="Date"
          className={`${SHADOW_SLIDER} bg-[linear-gradient(90deg,#f8f4e4,#dcb22e_35%,#c80f14_68%,#e08790_85%,#f0c9cf)]`}
        />
        <span className="flex justify-between px-1">
          {"JFMAMJJASOND".split("").map((m, i) => (
            <span key={i}>{m}</span>
          ))}
        </span>
      </label>
      <label className="flex w-[118px] flex-col gap-[3px]">
        <input
          type="range"
          min={0}
          max={100}
          defaultValue={67}
          aria-label="Time"
          className={`${SHADOW_SLIDER} bg-[linear-gradient(90deg,#f4f7fa,#9db9d6_35%,#5c5fd6_65%,#2a2f8a_82%,#050510)]`}
        />
        <span className="flex justify-between">
          <span>06:43 AM</span>
          <span>Noon</span>
          <span>04:45 PM</span>
        </span>
      </label>
    </div>
  );
}

function SideTools() {
  return (
    <div className="w-[51px] shrink-0 overflow-hidden border-r border-[#b5b5b5] bg-[#f1f1f1]">
      <div className="mx-[3px] h-1.5 border-b border-dotted border-[#aaa]" />
      {SIDE.map((group, i) => (
        <div key={i} className={i === 0 ? "ml-0.5" : "ml-0.5 border-t border-[#b5b5b5] pt-[3px]"}>
          <div className="grid grid-cols-2">
            {group.map((n, k) => (
              <Tool key={k} name={n.replace("*", "")} active={n.startsWith("*")} />
            ))}
          </div>
        </div>
      ))}
    </div>
  );
}

const Dots = () => <div className="h-1.5 w-5 border-b border-dotted border-[#999]" />;

function Swirl() {
  return (
    <svg viewBox="0 0 22 12" className="h-3 w-[22px]" aria-hidden="true">
      <path d="M6 10Q15 13 21 9Q21 6 15 7Z" fill="#777" />
      <path d="M1 3Q2 0 8 1Q10 6 17 5Q19 8 14 10Q6 12 3 8Z" fill="#5f5eac" stroke="#2f2e66" strokeWidth=".7" />
      <path d="M2 5Q8 9 17 6M6 1L8 10M11 5L12 10" fill="none" stroke="#2f2e66" strokeWidth=".6" />
    </svg>
  );
}

function PluginTools() {
  return (
    <div className="flex w-[27px] shrink-0 flex-col items-center overflow-hidden border-r border-[#d8d8d8] bg-[#f1f1f1] pt-2.5">
      <Dots />
      <div className="flex flex-col items-center border-b border-[#b0b0b0] pt-0.5">
        {Array.from({ length: 11 }, (_, i) => (
          <Tool key={i} name={`d${i + 1}`} />
        ))}
      </div>
      <div className="h-[18px] shrink-0" />
      <Dots />
      <div className="flex flex-col items-center border-b border-[#b0b0b0] pb-0.5 pt-1 font-['Liberation_Sans',sans-serif] font-bold text-[#111]">
        {["C", "G"].map((l) => (
          <button key={l} type="button" className="relative h-6 w-6">
            <Icon name={l === "C" ? "fistY" : "fistO"} />
            <span className="absolute bottom-0 left-0 text-[12px] leading-[10px]">
              {l}
              <span className="text-[8px]">PU</span>
            </span>
          </button>
        ))}
        <Tool name="prims" />
      </div>
      <div className="h-1 shrink-0" />
      <Dots />
      <div className="flex flex-col items-center pt-px font-['Liberation_Sans',sans-serif] text-[11px] font-bold leading-[12px] text-[#2222c8]">
        {["Skin", "X / Y", "Bub"].map((l) => (
          <button key={l} type="button" className="flex h-6 w-6 flex-col items-center whitespace-nowrap">
            <span>{l}</span>
            <Swirl />
          </button>
        ))}
        <button type="button" aria-label="Play" className="my-1 flex size-4 items-center justify-center border border-[#ddd] border-b-[#888] border-r-[#888] bg-[#f0eee2]">
          <svg viewBox="0 0 10 10" className="size-2.5"><path d="M1 1L9 5L1 9Z" fill="#000" /></svg>
        </button>
        <button type="button" aria-label="Stop" className="my-1 flex size-4 items-center justify-center border border-[#ddd] border-b-[#888] border-r-[#888] bg-[#f0eee2]">
          <span className="h-1.5 w-2.5 bg-[#e01522]" />
        </button>
        <button type="button" className="relative h-6 w-6 text-[24px] leading-[22px] text-[#1818d8]">
          <span className="absolute bottom-0 left-0"><Swirl /></span>
          <span className="relative">?</span>
        </button>
      </div>
    </div>
  );
}

function Model() {
  return (
    <svg viewBox="78 110 1202 542" preserveAspectRatio="xMinYMin slice" className="h-full w-full" role="img" aria-label="Wardrobe model">
      <defs>
        <pattern id="dots" width="4" height="4" patternUnits="userSpaceOnUse">
          <rect width="4" height="4" fill="#d3d3de" />
          <rect width="1" height="1" fill="#8080b4" />
          <rect x="2" y="2" width="1" height="1" fill="#8080b4" />
        </pattern>
        <linearGradient id="wood" x1="0" y1="0" x2="1" y2="1">
          <stop offset="0" stopColor="#82796f" />
          <stop offset="1" stopColor="#7b7269" />
        </linearGradient>
      </defs>
      <rect x="78" y="110" width="1202" height="542" fill="#c1c0c7" />
      <path d="M78 121.500L131 110" stroke="#7fc08a" />
      <path d="M552 198L787 116L842 139L603 230Z" fill="url(#dots)" />
      <path d="M552 198L603 230L609 318L560 283Z" fill="#cbcbcb" />
      <path d="M603 230L842 139L833 219L609 318Z" fill="#dedede" />
      <path d="M560 283L609 318L622 546L583 507Z" fill="#cecece" />
      <path d="M609 318L833 219L807 432L622 545Z" fill="url(#wood)" />
      <g fill="none" stroke="#1b1b22">
        <path d="M552 198L787 116L842 139" strokeWidth="1.500" />
        <path d="M552 198L560 283L583 507L622.500 546" strokeWidth="1.300" />
        <path d="M842 139L833 219" strokeWidth="1.300" />
        <path d="M552 198L603 230L842 139M603 230L609 318" strokeWidth=".8" stroke="#666" />
        <path d="M560 283L609 318" strokeWidth="1.300" />
        <path d="M609 318.500L833 219.500" strokeWidth="2.200" stroke="#33373a" />
        <path d="M609 318L622.500 545" strokeWidth="1.800" />
        <path d="M833 219L807.500 432" strokeWidth="1.500" />
        <path d="M622.500 545L807 433" strokeWidth="2.800" stroke="#35302c" />
        <path d="M661.500 296L664.500 517M709 276L703.700 493M753 256L740.700 471M795 237L775.700 450" strokeWidth=".9" stroke="#35302c" />
        <path
          d="M660.500 403.500L662.300 464.500M704.700 380L703.500 440.500M710.500 377.500L709 438M784 338.500L779 398M789.500 336L784 395"
          strokeWidth="3.200"
          stroke="#080808"
          strokeLinecap="round"
        />
        <path d="M413 110L552 198M603 230L1092 541.500" strokeWidth=".9" stroke="#3c3c3c" strokeDasharray="2.500 2.500" />
      </g>
      <g fill="none" strokeWidth="3.500">
        <path d="M606 370Q610 367 615 369V374" stroke="#5db98c" />
        <path d="M604.500 369V373Q608 377 612 374" stroke="#b3173a" strokeWidth="4" />
        <path d="M610.500 364V379" stroke="#222" strokeWidth="1.200" />
      </g>
    </svg>
  );
}

function PanelHeader({ title, open = false }: { title: string; open?: boolean }) {
  return (
    <h2 className="flex h-[13px] shrink-0 items-center border-b border-[#a0a0a0] bg-gradient-to-b from-[#dedede] to-[#b0b0b0] pl-1 pr-0.5">
      <button type="button" aria-expanded={open} className="flex flex-1 items-center gap-1">
        <svg viewBox="0 0 6 6" className="size-[5px]" aria-hidden="true">
          <path d={open ? "M0 1H6L3 6Z" : "M1 0L5.500 3L1 6Z"} fill="#000" />
        </svg>
        <span>{title}</span>
      </button>
      <button type="button" aria-label={`Close ${title}`} className="flex size-2 items-center justify-center rounded-[2px] bg-white">
        <span className="size-0.5 bg-[#777]" />
      </button>
    </h2>
  );
}

const MATERIALS: { color: string; corner?: boolean; selected?: boolean; inset?: boolean }[] = [
  { color: "bg-[#ffffff]", corner: true },
  { color: "bg-[#f3f3f3]", corner: true },
  { color: "bg-[#000000]", corner: true },
  { color: "bg-[#dcdedf]" },
  { color: "bg-[#5f656a]" },
  { color: "bg-[linear-gradient(135deg,#c5b899,#d8ccb2_50%,#b9a988)]", corner: true },
  { color: "bg-[#1d1e1e]" },
  { color: "bg-[#0e0542]" },
  { color: "bg-[repeating-linear-gradient(0deg,#2c2422_0_3px,#352b28_3px_4px)]", corner: true },
  { color: "bg-[#a94a19]", inset: true },
  { color: "bg-[#8b857b]", corner: true, selected: true },
  { color: "bg-[#5f4029]", corner: true },
  { color: "bg-[#442e20]" },
  { color: "bg-[#6f7f88]" },
  { color: "bg-[#99742c]" },
  { color: "bg-[#99742c]" },
];

const SELECT_BASE = "appearance-none border border-[#c4c4c4] bg-white px-0.5 text-[8px] text-[#222]";

const Chevron = () => (
  <svg viewBox="0 0 8 6" className="pointer-events-none absolute right-1 top-1/2 h-1.5 w-2 -translate-y-1/2" aria-hidden="true">
    <path d="M1 1.500L4 4.500L7 1.500" fill="none" stroke="#777" />
  </svg>
);

const Corner = () => (
  <svg viewBox="0 0 6 6" className="absolute bottom-px right-px size-1.5" aria-hidden="true">
    <path d="M5.500 0.500V5.500H0.500Z" fill="#fff" stroke="#bbb" strokeWidth=".6" />
  </svg>
);

function Glyph({ d, label, color = "#222", solid = false, box = "size-3" }: { d: string; label: string; color?: string; solid?: boolean; box?: string }) {
  return (
    <button type="button" aria-label={label} className={`${box} flex shrink-0 items-center justify-center`}>
      <svg viewBox="0 0 12 12" className="size-3 shrink-0">
        <path d={d} fill={solid ? color : "none"} stroke={color} strokeWidth={solid ? 0.5 : 1} />
      </svg>
    </button>
  );
}

const DetailsGlyph = () => (
  <button type="button" aria-label="Details" className="size-3 shrink-0">
    <svg viewBox="0 0 12 12" className="size-3">
      <path d="M1.500 2.500H6.500V9H1.500Z" fill="#9cc4e4" stroke="#123a5c" />
      <path d="M6 1L11.500 6L6 11Z" fill="#111" />
    </svg>
  </button>
);

function Tray() {
  return (
    <aside className="absolute bottom-0 right-0 top-[147px] flex w-[189px] flex-col overflow-hidden rounded-t-[4px] border-l-2 border-t-2 border-[#f4f4f4] bg-[#eeeeee] text-[8px] leading-[12px] text-[#222] shadow-[-1px_-1px_2px_#9a9aa4]">
      <header className="flex h-5 shrink-0 items-center justify-between bg-gradient-to-b from-[#d9e4ef] to-[#bfd0e2] pl-[3px] pr-1">
        <h1>Default Tray</h1>
        <button type="button" aria-label="Close tray" className="flex size-2 items-center justify-center border border-[#8f9cab]">
          <svg viewBox="0 0 6 6" className="size-1"><path d="M0 0L6 6M6 0L0 6" stroke="#778" /></svg>
        </button>
      </header>
      <div className="flex min-h-0 flex-1">
        <div className="ml-px flex w-[169px] shrink-0 flex-col">
          <PanelHeader title="Entity Info" open />
          <section className="flex h-[132px] shrink-0 flex-col bg-[#f4f9fd] px-1.5 pt-1">
            <p className="border-b border-[#b8b8b8] font-bold">5 Entities</p>
            <div className="mt-2 flex gap-1.5">
              <div className="flex size-8 items-center justify-center border border-[#dcdcdc] bg-white font-['Liberation_Serif',serif] text-[20px] font-bold text-[#999]">?</div>
              <div className="flex flex-1 flex-col gap-1">
                <div className="flex">
                  <label htmlFor="tag" className="w-[33px]">Tag:</label>
                  <div className="relative flex-1">
                    <select id="tag" className={`${SELECT_BASE} h-[13px] w-full`}>
                      <option>Untagged</option>
                    </select>
                    <Chevron />
                  </div>
                </div>
                <div className="flex items-center">
                  <span className="w-[33px]">Toggles:</span>
                  <span className="flex gap-1">
                    <span className="rounded-[2px] border border-[#5a9bd0] bg-[#cfe4f5]">
                      <Glyph label="Visible" d="M1 6Q6 1 11 6Q6 11 1 6ZM4.500 6A1.500 1.500 0 1 0 7.500 6A1.500 1.500 0 1 0 4.500 6" />
                    </span>
                    <Glyph label="Lock" box="h-3.5 w-3" d="M2 5.500H8V10.500H2ZM6.500 5.500V3Q8.500 1 10 3V5" color="#666" />
                    <Glyph label="Receive shadows" box="h-3.5 w-3" d="M3 3L8 2L9.500 7L5 10Z M3 3L5 6L9 5" color="#aaa" />
                    <Glyph label="Cast shadows" box="h-3.5 w-3" d="M3 3L8 2L9.500 7L5 8ZM5 8L9 11L11 8" color="#aaa" />
                  </span>
                </div>
              </div>
            </div>
          </section>

          <PanelHeader title="Materials" open />
          <section className="flex h-[224px] shrink-0 flex-col">
            <div className="flex h-[51px] shrink-0 gap-1 border-b border-[#c4c4c4] pl-px pt-px">
              <div className="relative size-[45px] shrink-0 border border-[#aaa] bg-[#8a8378]">
                <Corner />
              </div>
              <input aria-label="Material name" defaultValue="Heather_Band" className="h-3 w-[103px] border-b border-[#ccc] bg-white px-0.5" />
              <div className="flex flex-1 flex-col items-center gap-1 pr-1">
                <Glyph label="Secondary pane" solid d="M6 4L3 1H9ZM3 5H9V11H3Z" />
                <Glyph label="Create material" solid d="M2 4L6 2L11 3V8L6 11L2 9Z" />
                <svg viewBox="0 0 13 13" className="size-[13px]" aria-hidden="true"><path d="M0 0L13 13H0Z" fill="#a4b9ca" /><path d="M0 0H13V13Z" fill="#fff" /></svg>
              </div>
            </div>
            <div className="flex h-[19px] shrink-0 items-center justify-between pl-0.5 pr-0.5">
              <div className="flex" role="tablist">
                <button type="button" role="tab" aria-selected="true" className="bg-[#f8f8f8] px-0.5 pb-0.5">Select</button>
                <button type="button" role="tab" aria-selected="false" className="ml-1 px-0.5">Edit</button>
              </div>
              <Glyph label="Sample paint" solid d="M1 11L2 8L7 4L8 1.500L10.500 3L9 5.500L4 10Z" color="#333" />
            </div>
            <div className="flex h-[17px] shrink-0 items-center gap-1 pl-[5px]">
              <Glyph label="Back" d="M6 1.500V4H10V8H6V10.500L1.500 6Z" />
              <Glyph label="Forward" color="#aaa" d="M6 1.500V4H2V8H6V10.500L10.500 6Z" />
              <Glyph label="In model" d="M1 6.500L6 1.500L11 6.500M2.500 6V11H9.500V6M5 11V7.500H7V11" />
              <div className="relative w-[100px]">
                <select aria-label="Library" className={`${SELECT_BASE} h-[14px] w-full`}>
                  <option>In Model</option>
                </select>
                <Chevron />
              </div>
              <DetailsGlyph />
            </div>
            <div className="mt-px flex h-[133px] shrink-0 overflow-hidden border-b border-[#bbb] bg-white pl-1">
              <div className="grid grid-cols-4 content-start gap-0.5">
                {MATERIALS.map((m, i) => (
                  <button
                    key={i}
                    type="button"
                    aria-label={`Material ${i + 1}`}
                    className={
                      m.selected
                        ? "relative size-[33px] border-2 border-[#2b7cb4] bg-white"
                        : "relative size-[33px] border border-[#cfcfcf] bg-[#e8e8e8]"
                    }
                  >
                    <span className={`${m.color} ${m.inset ? "mx-[3px]" : "mx-0"} block h-full`} />
                    {m.corner && <Corner />}
                  </button>
                ))}
              </div>
              <div className="ml-auto w-2.5 bg-[#f2f2f2] pl-1 pt-2.5">
                <div className="h-3 w-px bg-[#777]" />
              </div>
            </div>
          </section>

          <div className="mt-px flex shrink-0 flex-col gap-px">
            <PanelHeader title="Components" />
            <PanelHeader title="Styles" />
            <PanelHeader title="Tags" />
            <PanelHeader title="Shadows" />
            <PanelHeader title="Scenes" open />
          </div>
          <div className="flex h-4 shrink-0 items-center justify-between bg-[#f4f9fd] pl-0.5 pr-1">
            <div className="flex gap-1">
              <Glyph label="Update scenes" d="M2 5Q3 2 6 2Q8 2 10 4V1M10 7Q9 10 6 10Q4 10 2 8V11" />
              <Glyph label="Add scene" d="M1 6A5 5 0 1 0 11 6A5 5 0 1 0 1 6M3.500 6H8.500M6 3.500V8.500" />
              <Glyph label="Remove scene" d="M1 6A5 5 0 1 0 11 6A5 5 0 1 0 1 6M3.500 6H8.500" />
            </div>
            <div className="flex gap-1">
              <Glyph label="Move down" color="#444" d="M5 10V3H8M3.500 8L5 10.500L6.500 8" />
              <Glyph label="Move up" color="#444" d="M7 2V9H4M5.500 4L7 1.500L8.500 4" />
              <Glyph label="View options" color="#333" d="M1 2H4V5H1ZM6 2H9V3.500H6ZM1 7H4V10H1ZM6 7H9V8.500H6ZM10 6H12" />
              <Glyph label="Show details" solid d="M2 1H10V7H2ZM4 10.500L6 8L8 10.500Z" />
              <DetailsGlyph />
            </div>
          </div>
          <div className="min-h-0 flex-1 border border-[#a8a8a8] bg-white" />
        </div>
        <div className="ml-1.5 mt-2.5 h-[460px] w-0.5 bg-[#969696]" />
      </div>
    </aside>
  );
}

function TaskButton({ label, active = false, dot = false, children }: { label: string; active?: boolean; dot?: boolean; children: React.ReactNode }) {
  return (
    <button type="button" aria-label={label} className="flex h-full items-center justify-center">
      <span className={`${active ? "bg-[#f8f0ec]" : ""} relative flex h-6 w-6 items-center justify-center rounded-[3px]`}>
        {children}
        {dot && <span className={`${active ? "w-2.5 bg-[#1f74b8]" : "w-1 bg-[#777]"} absolute bottom-0 h-0.5 rounded-full`} />}
      </span>
    </button>
  );
}

const Adobe = ({ t, className }: { t: string; className: string }) => (
  <span className={`${className} flex size-[15px] items-center justify-center rounded-[3px] text-[8px] font-bold`}>{t}</span>
);

function Taskbar() {
  return (
    <footer className="grid h-[31px] shrink-0 grid-cols-[1fr_auto_1fr] items-center border-t border-[#bcbcbc] bg-[linear-gradient(90deg,#d9d9d9_0%,#dadada_38%,#e6d9d2_50%,#f5dacd_58%,#efdbd2_68%,#fadcc9_80%,#f3dacd_100%)] text-[#333]">
      <button type="button" className="flex items-center gap-1 pl-3.5 text-left text-[8px] leading-[11px]">
        <svg viewBox="0 0 17 20" className="mb-1 h-5 w-[17px]" aria-hidden="true">
          <circle cx="7" cy="12" r="7" fill="#f28a1c" />
          <circle cx="5" cy="10" r="3.500" fill="#fbb03a" />
          <circle cx="11" cy="6" r="5.300" fill="#b5121f" />
          <text x="11" y="9" textAnchor="middle" fontSize="8" fill="#fff" fontFamily="Roboto">4</text>
        </svg>
        <span>
          <span className="block">26°C</span>
          <span className="block text-[#666]">Sunny</span>
        </span>
      </button>
      <div className="flex h-full items-center">
        <button type="button" aria-label="Start" className="flex w-8 items-center justify-center">
          <span className="grid size-4 grid-cols-2 gap-px">
            <span className="bg-[#35b3e6]" /><span className="bg-[#2aa5e0]" /><span className="bg-[#1f97d8]" /><span className="bg-[#1686cc]" />
          </span>
        </button>
        <label className="flex h-5 w-[145px] items-center gap-1.5 rounded-full bg-[#f3f3f3] pl-2 pr-1">
          <svg viewBox="0 0 10 10" className="size-2.5" aria-hidden="true"><circle cx="4.200" cy="4.200" r="3.300" fill="none" stroke="#222" strokeWidth="1.200" /><path d="M6.500 6.500L9.500 9.500" stroke="#222" strokeWidth="1.300" /></svg>
          <input aria-label="Search" placeholder="Search" className="w-[82px] bg-transparent text-[9px] placeholder:text-[#666]" />
          <svg viewBox="0 0 28 16" className="h-4 w-7" aria-hidden="true">
            <path d="M1 13L5 4L12 1L11 8L6 12Z" fill="#7d86a8" /><path d="M1 14H14L10 10Z" fill="#3e4a70" />
            <path d="M15 2L17 14M19 4V14M23 3L21 13M26 2L24 13" stroke="#646e90" strokeWidth="1.600" />
          </svg>
        </label>
        <div className="grid h-full w-[354px] grid-cols-12">
          <TaskButton label="Task view">
            <svg viewBox="0 0 16 16" className="size-4"><rect x="4" y="1" width="12" height="11" fill="#f7f7f7" /><path d="M1 3H6V10H12V15H1Z" fill="#333" /><rect x="6" y="4" width="6" height="6" fill="#999" /></svg>
          </TaskButton>
          <TaskButton label="Copilot">
            <svg viewBox="0 0 16 16" className="size-4"><path d="M5 1H10L7 11H2Q0 10 1 7Z" fill="#2b9fe8" /><path d="M10 1Q12 1 12 5H8L6 11H1Q2 14 4 14H6L10 3Z" fill="#38b779" /><path d="M11 5H14Q16 6 15 9L13 13Q12 15 10 15H5Q8 14 9 10Z" fill="#e8568f" /><path d="M11 5H14Q16 6 15 9H10Z" fill="#b35be0" /><path d="M5 15Q8 14 9 11H13Q12 15 10 15Z" fill="#f29a3d" /></svg>
          </TaskButton>
          <TaskButton label="Teams">
            <svg viewBox="0 0 16 16" className="size-4"><circle cx="9" cy="3" r="2.500" fill="#7a7fe8" /><circle cx="14" cy="4.500" r="1.700" fill="#5a5fd0" /><path d="M6 6H16V12Q14 15 10 15Q6 14 6 11Z" fill="#7a7fe8" /><rect x="0" y="6" width="9" height="8" rx="1" fill="#4b4fc4" /><path d="M2.500 8H6.500M4.500 8V12.500" stroke="#fff" strokeWidth="1.200" /></svg>
          </TaskButton>
          <TaskButton label="File Explorer" dot>
            <svg viewBox="0 0 16 16" className="size-4"><path d="M0 2H6L8 4H16V14H0Z" fill="#d99e22" /><rect y="5" width="16" height="9.500" rx="1" fill="#fbd152" /><path d="M3 14.500V10.500H13V14.500Z" fill="#2a86cf" /></svg>
          </TaskButton>
          <TaskButton label="Edge">
            <svg viewBox="0 0 16 16" className="size-4"><circle cx="8" cy="8" r="8" fill="#1678c2" /><path d="M0.500 7Q2 0 9 0Q16 1 16 7Q15 11 11 10Q12 7 9 5Q4 4 0.500 7Z" fill="#3fc48f" /><path d="M5 9Q5 6 9 5Q5 4 1 7Q-1 13 6 15.800Q3 12 5 9Z" fill="#2aa7dc" /><path d="M9 7Q7 8 8 10Q10 13 14.500 11.500Q11 16 7 13Q4 9 9 7Z" fill="#e3eef6" /></svg>
          </TaskButton>
          <TaskButton label="Store">
            <svg viewBox="0 0 16 16" className="size-4"><path d="M5 4V1H11V4" fill="none" stroke="#1b6a9b" strokeWidth="1.300" /><rect y="3.500" width="16" height="12" rx="1.500" fill="#1c5f8f" /><path d="M4.500 6H7.500V9H4.500Z" fill="#f35325" /><path d="M8.500 6H11.500V9H8.500Z" fill="#81bc06" /><path d="M4.500 10H7.500V13H4.500Z" fill="#05a6f0" /><path d="M8.500 10H11.500V13H8.500Z" fill="#ffba08" /></svg>
          </TaskButton>
          <TaskButton label="Premiere Pro"><Adobe t="Pr" className="bg-[#0a005c] text-[#c7a4ff]" /></TaskButton>
          <TaskButton label="After Effects"><Adobe t="Ae" className="bg-[#0a005c] text-[#b9a2ff]" /></TaskButton>
          <TaskButton label="Photoshop"><Adobe t="Ps" className="bg-[#001e36] text-[#44b4f4]" /></TaskButton>
          <TaskButton label="Chrome" dot>
            <svg viewBox="0 0 16 16" className="size-4"><circle cx="8" cy="8" r="8" fill="#2ba24c" /><path d="M1.100 4A8 8 0 0 1 15 4.100H8L4.500 10Z" fill="#e23b2e" /><path d="M15 4.100A8 8 0 0 1 8 16L11.500 9.500V4.100Z" fill="#fbc116" /><circle cx="8" cy="8" r="3.700" fill="#fff" /><circle cx="8" cy="8" r="2.900" fill="#3b7ded" /></svg>
          </TaskButton>
          <TaskButton label="SketchUp" active dot><SketchUpLogo className="size-3.5" /></TaskButton>
          <TaskButton label="Snipping Tool" dot>
            <svg viewBox="0 0 16 16" className="size-4"><path d="M0 0H10V10H0Z" fill="#fff" /><path d="M1.500 1.500H8.500V7.500H1.500Z" fill="none" stroke="#c03022" strokeWidth="1.500" strokeDasharray="1.500 1" /><path d="M4 9.500H13M10 3V13" stroke="#8e989f" strokeWidth="1.400" /><circle cx="14" cy="9" r="1.500" fill="none" stroke="#2b9ad8" strokeWidth="1.300" /><circle cx="9.500" cy="14" r="1.500" fill="none" stroke="#2b9ad8" strokeWidth="1.300" /></svg>
          </TaskButton>
        </div>
      </div>
    </footer>
  );
}

function SketchUpLogo({ className }: { className: string }) {
  return (
    <svg viewBox="0 0 14 14" className={className} aria-hidden="true">
      <path d="M1 4L6 1L11 2L13 5V10L8 13.500L5 12V10L1 8.500Z" fill="#17629a" />
      <path d="M1.500 5L6 3Q10 4 10 8V12M2 7.500L6 5.500Q8 6.500 8 9V13M5.500 8V12M5 1.500Q12 3 12 9" fill="none" stroke="#bfe0f2" strokeWidth=".8" />
    </svg>
  );
}

export default function App() {
  return (
    <div className="relative flex h-screen w-full flex-col overflow-hidden bg-[#f0f0f0] font-['Roboto','Noto_Sans',sans-serif] text-[#1c1c1c]">
      <header className="flex h-[15px] shrink-0 items-center bg-gradient-to-r from-[#f2f2f2] to-[#f9efed] pl-0.5">
        <SketchUpLogo className="size-2.5" />
        <span className="ml-1 flex-1 text-[8px]">mohammad ji - SketchUp Pro 2023</span>
        <div className="flex gap-[18px] pr-[11px]">
          <Glyph label="Minimize" d="M3 6.500H9" color="#333" />
          <Glyph label="Restore" d="M3 5H8V10H3ZM5 5V3H10V8H8" color="#333" />
          <Glyph label="Close" d="M3 3L9 9M9 3L3 9" color="#333" />
        </div>
      </header>
      <nav className="flex h-[14px] shrink-0 items-center gap-[11px] bg-white pl-[5px] text-[8px]">
        {["File", "Edit", "View", "Camera", "Draw", "Tools", "Window", "Extensions", "Help"].map((m) => (
          <button key={m} type="button">{m}</button>
        ))}
      </nav>

      <div className="flex h-[27px] shrink-0 items-center overflow-hidden border-b border-[#bcbcbc]">
        <Tools spec={ROW1} />
      </div>
      <div className="flex h-[27px] shrink-0 items-center overflow-hidden border-b border-[#cfcfcf]">
        <Tools spec={ROW2} />
        <div className="mr-8 h-[26px] w-0.5 shrink-0 border-l border-[#b5b5b5]" />
        <Tools spec={ROW2B} />
        <div className="h-[26px] shrink-0 border-l border-[#b5b5b5]" />
      </div>
      <div className="flex h-[27px] shrink-0 items-center overflow-hidden border-b border-[#aaa]">
        <Tools spec={ROW3} />
        <ShadowControls />
      </div>

      <div className="flex min-h-0 flex-1">
        <SideTools />
        <PluginTools />
        <main className="min-w-0 flex-1 overflow-hidden bg-[#c1c0c7]">
          <Model />
        </main>
      </div>

      <div className="flex h-[19px] shrink-0">
        <div className="flex w-[198px] items-center border-b border-r border-[#b0b0b0] pl-1.5 text-[8px]">
          <label htmlFor="distance" className="w-[84px]">Distance</label>
          <input id="distance" defaultValue={'24"'} className="h-4 min-w-0 flex-1 border-b-2 border-[#c8c8c8] bg-white" />
        </div>
      </div>
      <div className="flex h-[18px] shrink-0 items-center text-[9px]">
        <div className="flex gap-1 px-[3px]">
          <Glyph label="Geolocation" color="#aaa" d="M1 6A5 5 0 1 0 11 6A5 5 0 1 0 1 6M6 9L4.500 5Q6 2 7.500 5Z" />
          <Glyph label="Credits" d="M1 6A5 5 0 1 0 11 6A5 5 0 1 0 1 6M6 2.500V9.500M5 4V8H7V4Z" />
        </div>
        <div className="ml-1 h-3.5 w-px bg-[#b0b0b0]" />
        <p className="pl-[3px]">
          Click to push or pull the selected face. | Ctrl = Toggle Create New Starting Face. | Alt = Toggle Stretch Mode.
        </p>
      </div>
      <Taskbar />

      <Tray />
      <div className="pointer-events-none absolute bottom-[64px] right-[57px] w-[158px] whitespace-nowrap text-[#8a8a8a]/50">
        <p className="text-[13px] leading-[15px]">Activate Windows</p>
        <p className="text-[10px] leading-[14px]">Go to Settings to activate Windows.</p>
      </div>
    </div>
  );
}
